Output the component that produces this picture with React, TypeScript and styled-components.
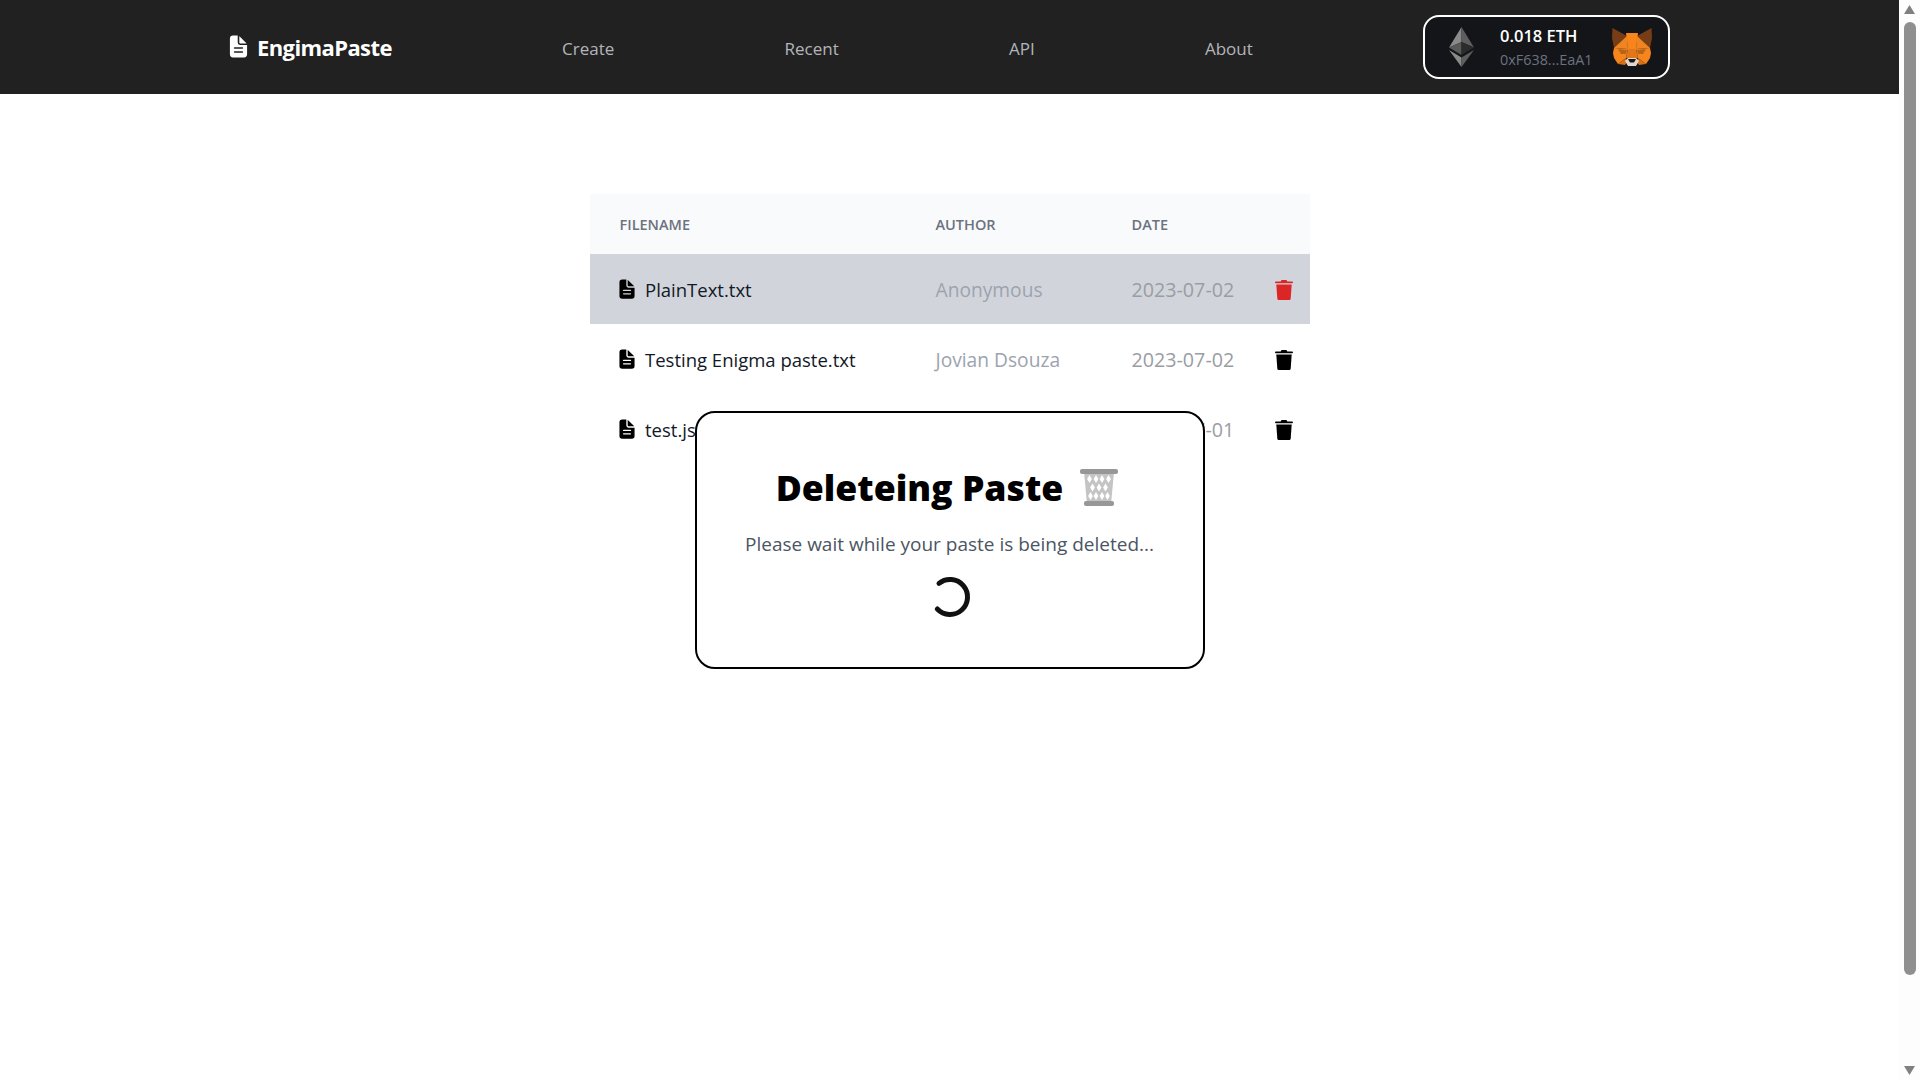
import React from "react";
import styled, { createGlobalStyle } from "styled-components";
import { IoDocumentText } from "react-icons/io5";

const Global = createGlobalStyle`
  html, body { height: 100%; overflow: hidden; }
  body { margin: 0; background: #fff; font-family: "Open Sans", "Noto Sans", sans-serif; }
  * { box-sizing: border-box; }
`;

const Shell = styled.div`
  height: 100vh;
  display: flex;
`;

const Content = styled.div`
  position: relative;
  flex: 1;
  min-width: 0;
`;

const ScrollTrack = styled.div`
  width: 21px;
  display: flex;
  flex-direction: column;
  align-items: center;
  padding: 5px 0;
  background: #fdfdfd;
`;

const ScrollThumb = styled.div`
  width: 12px;
  height: 953px;
  margin-top: 8px;
  background: #8f8f8f;
  border-radius: 6px;
`;

const ScrollArrow = styled.svg`
  width: 11px;
  height: 9px;
  fill: #808080;
`;

const ScrollSpacer = styled.div`
  flex: 1;
`;

const Header = styled.header`
  height: 94px;
  background: #212121;
`;

const HeaderInner = styled.div`
  max-width: 1441px;
  height: 100%;
  margin: 0 auto;
  display: flex;
  align-items: center;
  justify-content: space-between;
`;

const Brand = styled.a`
  display: flex;
  align-items: center;
  gap: 6px;
  color: #fff;
  font-size: 22px;
  font-weight: 700;
  letter-spacing: -0.6px;
  svg { width: 25px; height: 25px; margin: -2px 0 0 -3px; }
`;

const NavLink = styled.a`
  margin-top: 2px;
  color: #b3b5b9;
  font-size: 17px;
  font-weight: 500;
`;

const Wallet = styled.div`
  width: 247px;
  height: 64px;
  display: flex;
  align-items: center;
  padding: 0 16px 0 24px;
  background: #141518;
  border: 2px solid #fff;
  border-radius: 16px;
`;

const WalletText = styled.div`
  flex: 1;
  margin-left: 26px;
  display: flex;
  flex-direction: column;
  gap: 2px;
`;

const Balance = styled.span`
  color: #fff;
  font-size: 16.5px;
  font-weight: 600;
  line-height: 24px;
`;

const Address = styled.span`
  color: #6b7280;
  font-size: 14.4px;
  line-height: 20px;
`;

const Main = styled.main`
  padding-top: 100px;
`;

const Table = styled.div`
  width: 720px;
  margin: 0 auto;
`;

const Row = styled.div<{ $active?: boolean }>`
  display: grid;
  grid-template-columns: 316px 196px 1fr 60px;
  align-items: center;
  height: 70px;
  padding-left: 30px;
  background: ${(p) => (p.$active ? "#d1d5db" : "#fff")};
  color: ${(p) => (p.$active ? "#dc2626" : "#000")};
`;

const HeadRow = styled(Row)`
  height: 60px;
  background: #f9fafb;
`;

const HeadCell = styled.div`
  color: #6b7280;
  font-size: 14.5px;
  font-weight: 600;
  text-transform: uppercase;
`;

const NameCell = styled.div`
  display: flex;
  align-items: center;
  gap: 7px;
  color: #111827;
  font-size: 18.5px;
  white-space: nowrap;
  svg { width: 22px; height: 22px; color: #000; margin: 0 0 0 -3.5px; }
`;

const MutedCell = styled.div`
  margin-top: 1px;
  color: #9ca3af;
  font-size: 19.2px;
  white-space: nowrap;
`;

const DateCell = styled(MutedCell)`
  margin-top: 0;
  color: #9a9da4;
  font-size: 19.7px;
`;

const TrashButton = styled.div`
  display: flex;
  justify-content: center;
  padding: 1px 0 0 8px;
  svg { width: 18px; height: 20px; }
`;

const Overlay = styled.div`
  position: absolute;
  inset: 0;
  display: flex;
  align-items: center;
  justify-content: center;
`;

const Dialog = styled.div`
  width: 510px;
  height: 258px;
  padding-top: 50px;
  display: flex;
  flex-direction: column;
  align-items: center;
  background: #fff;
  border: 2px solid #000;
  border-radius: 20px;
`;

const Title = styled.h2`
  margin: 0 5px 0 0;
  display: flex;
  align-items: center;
  gap: 17px;
  color: #000;
  font-size: 35.6px;
  font-weight: 800;
  line-height: 48px;
  svg { width: 38px; height: 38px; }
`;

const Message = styled.p`
  margin: 19px 0 0;
  color: #4b5563;
  font-size: 19px;
  line-height: 28px;
`;

const Spinner = styled.svg`
  width: 42px;
  height: 42px;
  margin-top: 18px;
`;

const TrashIcon = () => (
  <svg viewBox="0 0 18 20" fill="currentColor">
    <path d="M6.5 0h5l.8 1.6h4.6c.6 0 1.1.3 1.1.8s-.5.8-1.1.8H1.1C.5 3.2 0 2.9 0 2.4s.5-.8 1.1-.8h4.6z" />
    <path d="M1.3 4.4h15.4l-1 14c-.1.9-.8 1.6-1.7 1.6H4c-.9 0-1.6-.7-1.7-1.6z" />
  </svg>
);

const EthIcon = () => (
  <svg width="25" height="40" viewBox="0 0 25 40">
    <polygon points="12.5,0 0,20.5 12.5,15" fill="#8a8a8a" />
    <polygon points="12.5,0 25,20.5 12.5,15" fill="#5e5e5e" />
    <polygon points="0,20.5 12.5,15 12.5,28" fill="#5a5a5a" />
    <polygon points="25,20.5 12.5,15 12.5,28" fill="#2c2c2c" />
    <polygon points="0,23 12.5,30.5 12.5,40" fill="#8a8a8a" />
    <polygon points="25,23 12.5,30.5 12.5,40" fill="#5e5e5e" />
  </svg>
);

const FoxIcon = () => (
  <svg width="40" height="38" viewBox="0 0 40 38">
    <polygon points="0.5,0 15,8 11,17 2,20 0,10" fill="#763d16" />
    <polygon points="39.5,0 25,8 29,17 38,20 40,10" fill="#763d16" />
    <polygon points="14,5 26,5 24,21 16,21" fill="#f6851b" />
    <polygon points="15,8 2,20 16,21" fill="#ef8420" />
    <polygon points="25,8 38,20 24,21" fill="#ef8420" />
    <polygon points="2,20 16,21 14,30 6,36 2,30 1,25" fill="#f6851b" />
    <polygon points="38,20 24,21 26,30 34,36 38,30 39,25" fill="#f6851b" />
    <polygon points="16,21 24,21 26,30 20,31 14,30" fill="#e2761b" />
    <polygon points="6,21 15,22 14,26 9,26" fill="#b5641c" />
    <polygon points="34,21 25,22 26,26 31,26" fill="#b5641c" />
    <polygon points="6,36 14,30 15,34 13,37" fill="#d7701a" />
    <polygon points="34,36 26,30 25,34 27,37" fill="#d7701a" />
    <polygon points="13,33 16,30 24,30 27,33 24,38 16,38" fill="#e4d6c8" />
    <polygon points="16,31 24,31 22,34.5 18,34.5" fill="#161616" />
  </svg>
);

const diamonds = [
  [9.5, 11], [16, 11], [22, 11], [28.5, 11],
  [12.5, 19.5], [19, 19.5], [25.5, 19.5],
  [10.5, 28], [16, 28], [22, 28], [27.5, 28],
];

const BasketIcon = () => (
  <svg viewBox="0 0 38 38">
    <path d="M4 4h30l-3 32H7z" fill="#c4c4c4" />
    <g fill="#fff">
      {diamonds.map(([x, y]) => (
        <polygon key={`${x}-${y}`} points={`${x},${y - 4} ${x + 2.4},${y} ${x},${y + 4} ${x - 2.4},${y}`} />
      ))}
    </g>
    <rect x="0" y="1" width="38" height="5" rx="2" fill="#979797" />
    <rect x="4" y="33" width="30" height="5" rx="2" fill="#979797" />
  </svg>
);

const rows = [
  { name: "PlainText.txt", author: "Anonymous", date: "2023-07-02", active: true },
  { name: "Testing Enigma paste.txt", author: "Jovian Dsouza", date: "2023-07-02" },
  { name: "test.js", author: "Anonymous", date: "2023-07-01" },
];

export default function App() {
  return (
    <Shell>
      <Global />
      <Content>
        <Header>
          <HeaderInner>
            <Brand>
              <IoDocumentText />
              EngimaPaste
            </Brand>
            <NavLink>Create</NavLink>
            <NavLink>Recent</NavLink>
            <NavLink>API</NavLink>
            <NavLink>About</NavLink>
            <Wallet>
              <EthIcon />
              <WalletText>
                <Balance>0.018 ETH</Balance>
                <Address>0xF638...EaA1</Address>
              </WalletText>
              <FoxIcon />
            </Wallet>
          </HeaderInner>
        </Header>
        <Main>
          <Table>
            <HeadRow>
              <HeadCell>Filename</HeadCell>
              <HeadCell>Author</HeadCell>
              <HeadCell>Date</HeadCell>
            </HeadRow>
            {rows.map((r) => (
              <Row key={r.name} $active={r.active}>
                <NameCell>
                  <IoDocumentText />
                  {r.name}
                </NameCell>
                <MutedCell>{r.author}</MutedCell>
                <DateCell>{r.date}</DateCell>
                <TrashButton>
                  <TrashIcon />
                </TrashButton>
              </Row>
            ))}
          </Table>
        </Main>
        <Overlay>
          <Dialog>
            <Title>
              Deleteing Paste
              <BasketIcon />
            </Title>
            <Message>Please wait while your paste is being deleted...</Message>
            <Spinner viewBox="0 0 42 42">
              <path
                d="M10 7.4 A17.5 17.5 0 1 1 8.3 33"
                fill="none"
                stroke="#111"
                strokeWidth="5"
                strokeLinecap="round"
              />
            </Spinner>
          </Dialog>
        </Overlay>
      </Content>
      <ScrollTrack>
        <ScrollArrow viewBox="0 0 11 9">
          <polygon points="5.5,0 11,9 0,9" />
        </ScrollArrow>
        <ScrollThumb />
        <ScrollSpacer />
        <ScrollArrow viewBox="0 0 11 9">
          <polygon points="0,0 11,0 5.5,9" />
        </ScrollArrow>
      </ScrollTrack>
    </Shell>
  );
}
